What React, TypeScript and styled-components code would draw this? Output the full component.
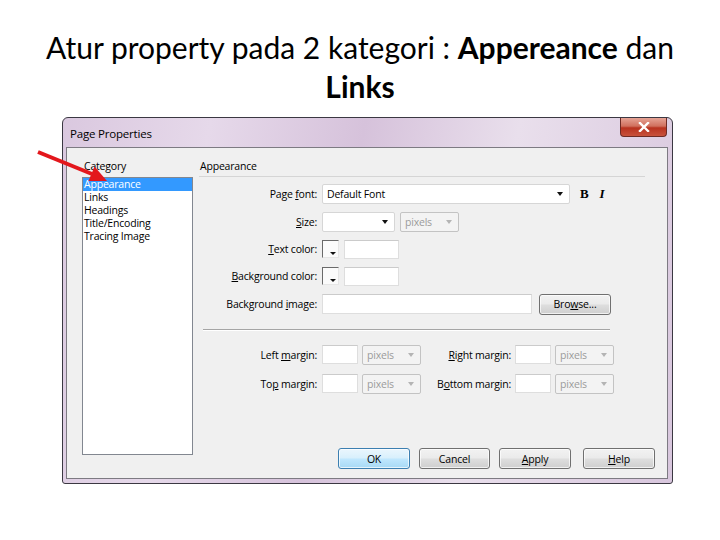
import React from "react";
import styled, { createGlobalStyle, css } from "styled-components";

const GlobalStyle = createGlobalStyle`
  html, body {
    margin: 0;
    padding: 0;
    background: #ffffff;
  }
`;

const Slide = styled.div`
  position: relative;
  width: 720px;
  height: 540px;
  padding-top: 28px;
  box-sizing: border-box;
  overflow: hidden;
`;

const Heading = styled.h1`
  margin: 0;
  font-family: Lato, "Liberation Sans", sans-serif;
  font-weight: 400;
  font-size: 30px;
  line-height: 39px;
  text-align: center;
  color: #000;

  b {
    font-weight: 700;
  }
`;

const Pointer = styled.svg`
  position: absolute;
  left: 30px;
  top: 140px;
  width: 85px;
  height: 50px;
  z-index: 2;
`;

const Window = styled.div`
  margin: 11px 0 0 62px;
  width: 611px;
  height: 367px;
  box-sizing: border-box;
  border: 1px solid #3b3842;
  border-radius: 6px 6px 3px 3px;
  padding: 0 4px 4px 3px;
  display: flex;
  flex-direction: column;
  background: linear-gradient(
    100deg,
    #dac8df 0%,
    #e6d9ea 22%,
    #d6c2db 45%,
    #e9dfec 68%,
    #d8c6dd 100%
  );
  font-family: "Open Sans", "Noto Sans", sans-serif;
  font-size: 10.5px;
  letter-spacing: -0.2px;
  color: #000;
`;

const TitleBar = styled.div`
  height: 29px;
  display: flex;
  align-items: center;
  padding-left: 4px;
  font-size: 11.5px;
  padding-top: 2px;
  box-sizing: border-box;
`;

const CloseButton = styled.div`
  align-self: flex-start;
  margin-top: -2px;
  margin-left: auto;
  margin-right: 1px;
  width: 47px;
  height: 19px;
  box-sizing: border-box;
  border: 1px solid #6e2b24;
  border-top: none;
  border-radius: 0 0 4px 4px;
  background: linear-gradient(#e6a395 0%, #d0705e 45%, #b8321f 55%, #c8523c 100%);
  display: flex;
  align-items: center;
  justify-content: center;
`;

const Panel = styled.div`
  flex: 1;
  display: flex;
  border: 1px solid #7d7a82;
  background: #f0f0f0;
  padding: 11px 12px 9px 15px;
`;

const CategoryColumn = styled.div`
  width: 111px;
  display: flex;
  flex-direction: column;
`;

const Caption = styled.div`
  line-height: 14px;
  height: 14px;
  padding-left: 2px;
  margin-bottom: 4px;
`;

const ListBox = styled.div`
  flex: 1;
  margin-bottom: 14px;
  border: 1px solid #828790;
  background: #fff;
`;

const ListItem = styled.div<{ selected?: boolean }>`
  height: 13px;
  line-height: 13px;
  padding-left: 1px;
  ${(p) =>
    p.selected &&
    css`
      background: #3399ff;
      color: #fff;
    `}
`;

const FormColumn = styled.div`
  flex: 1;
  margin-left: 6px;
  display: flex;
  flex-direction: column;
`;

const SectionTitle = styled.div`
  margin-right: 10px;
  padding: 0 0 3px 1px;
  line-height: 14px;
  border-bottom: 1px solid #d5d5d5;
`;

const Row = styled.div<{ h: number; top?: number }>`
  height: ${(p) => p.h}px;
  margin-top: ${(p) => p.top ?? 0}px;
  display: flex;
  align-items: center;
`;

const Label = styled.label<{ w?: number }>`
  width: ${(p) => p.w ?? 118}px;
  flex: none;
  text-align: right;
  white-space: nowrap;
`;

const Field = styled.div<{ w: number; h?: number; gap?: number }>`
  width: ${(p) => p.w}px;
  height: ${(p) => p.h ?? 20}px;
  margin-left: ${(p) => p.gap ?? 5}px;
  flex: none;
  box-sizing: border-box;
  border: 1px solid #dedede;
  border-top-color: #cbcbcb;
  background: #fff;
`;

const Select = styled.div<{ w: number; gap?: number; disabled?: boolean }>`
  width: ${(p) => p.w}px;
  height: 20px;
  margin-left: ${(p) => p.gap ?? 5}px;
  flex: none;
  box-sizing: border-box;
  display: flex;
  align-items: center;
  justify-content: space-between;
  padding: 0 6px 0 4px;
  border: 1px solid ${(p) => (p.disabled ? "#c3c3c3" : "#d6d6d6")};
  border-radius: 2px;
  background: ${(p) => (p.disabled ? "#f3f3f3" : "#fff")};
  color: ${(p) => (p.disabled ? "#9b9b9b" : "#000")};
`;

const Caret = styled.span<{ disabled?: boolean }>`
  width: 0;
  height: 0;
  border-left: 3.5px solid transparent;
  border-right: 3.5px solid transparent;
  border-top: 4px solid ${(p) => (p.disabled ? "#b4b4b4" : "#111")};
`;

const StyleToggle = styled.span<{ italic?: boolean }>`
  margin-left: ${(p) => (p.italic ? 11 : 10)}px;
  font-family: "Liberation Serif", serif;
  font-size: 13px;
  font-weight: 700;
  font-style: ${(p) => (p.italic ? "italic" : "normal")};
`;

const Swatch = styled.div`
  position: relative;
  width: 17px;
  height: 18px;
  margin-left: 5px;
  flex: none;
  box-sizing: border-box;
  border: 1px solid #e6e6e6;
  border-top-color: #6a6a6a;
  border-left-color: #6a6a6a;
  background: #fbfbfb;

  &::after {
    content: "";
    position: absolute;
    right: 2px;
    bottom: 2px;
    border-left: 3px solid transparent;
    border-right: 3px solid transparent;
    border-top: 3px solid #111;
  }
`;

const Separator = styled.div`
  margin: 11px 0 0 4px;
  width: 407px;
  border-top: 1px solid #a5a5a5;
  border-bottom: 1px solid #ffffff;
`;

const Button = styled.div<{ primary?: boolean; gap?: number; w?: number }>`
  width: ${(p) => p.w ?? 72}px;
  height: 21px;
  margin-left: ${(p) => p.gap ?? 9}px;
  box-sizing: border-box;
  display: flex;
  align-items: center;
  justify-content: center;
  border: 1px solid ${(p) => (p.primary ? "#3c7fb1" : "#707070")};
  border-radius: 3px;
  background: ${(p) =>
    p.primary
      ? "linear-gradient(#eaf6fd 0%, #d9f0fc 45%, #bee6fd 55%, #a7d9f5 100%)"
      : "linear-gradient(#f2f2f2 0%, #ebebeb 45%, #dddddd 55%, #cfcfcf 100%)"};
  box-shadow: inset 0 0 0 1px rgba(255, 255, 255, 0.7);
`;

const ButtonBar = styled.div`
  margin-top: auto;
  display: flex;
  justify-content: flex-end;
`;

const categories = ["Appearance", "Links", "Headings", "Title/Encoding", "Tracing Image"];

const PixelsSelect = ({ w = 59, gap = 4 }: { w?: number; gap?: number }) => (
  <Select w={w} gap={gap} disabled>
    <span>pixels</span>
    <Caret disabled />
  </Select>
);

const App = () => {
  return (
    <Slide>
      <GlobalStyle />
      <Heading>
        Atur property pada 2 kategori : <b>Appereance</b> dan
        <br />
        <b>Links</b>
      </Heading>

      <Pointer viewBox="0 0 85 50">
        <line x1="8" y1="12" x2="62" y2="34" stroke="#e3171c" strokeWidth="4" />
        <polygon points="77,41 58.5,41 64.5,26.5" fill="#e3171c" />
      </Pointer>

      <Window>
        <TitleBar>
          Page Properties
          <CloseButton>
            <svg width="12" height="10" viewBox="0 0 12 10">
              <path d="M2 1 L10 9 M10 1 L2 9" stroke="#fff" strokeWidth="2.4" strokeLinecap="square" />
            </svg>
          </CloseButton>
        </TitleBar>

        <Panel>
          <CategoryColumn>
            <Caption>Category</Caption>
            <ListBox>
              {categories.map((c, i) => (
                <ListItem key={c} selected={i === 0}>
                  {c}
                </ListItem>
              ))}
            </ListBox>
          </CategoryColumn>

          <FormColumn>
            <SectionTitle>Appearance</SectionTitle>

            <Row h={28} top={3}>
              <Label>
                Page <u>f</u>ont:
              </Label>
              <Select w={248}>
                <span>Default Font</span>
                <Caret />
              </Select>
              <StyleToggle>B</StyleToggle>
              <StyleToggle italic>I</StyleToggle>
            </Row>

            <Row h={28}>
              <Label>
                <u>S</u>ize:
              </Label>
              <Select w={73}>
                <span />
                <Caret />
              </Select>
              <PixelsSelect gap={5} />
            </Row>

            <Row h={26}>
              <Label>
                <u>T</u>ext color:
              </Label>
              <Swatch />
              <Field w={55} h={19} />
            </Row>

            <Row h={28}>
              <Label>
                <u>B</u>ackground color:
              </Label>
              <Swatch />
              <Field w={55} h={19} />
            </Row>

            <Row h={28}>
              <Label>
                Background <u>i</u>mage:
              </Label>
              <Field w={210} />
              <Button gap={7}>
                Bro<u>w</u>se...
              </Button>
            </Row>

            <Separator />

            <Row h={29} top={9}>
              <Label>
                Left <u>m</u>argin:
              </Label>
              <Field w={36} h={19} />
              <PixelsSelect />
              <Label w={90}>
                <u>R</u>ight margin:
              </Label>
              <Field w={36} h={19} gap={4} />
              <PixelsSelect />
            </Row>

            <Row h={29}>
              <Label>
                To<u>p</u> margin:
              </Label>
              <Field w={36} h={19} />
              <PixelsSelect />
              <Label w={90}>
                B<u>o</u>ttom margin:
              </Label>
              <Field w={36} h={19} gap={4} />
              <PixelsSelect />
            </Row>

            <ButtonBar>
              <Button primary gap={0}>
                OK
              </Button>
              <Button w={71}>Cancel</Button>
              <Button>
                <u>A</u>pply
              </Button>
              <Button gap={12}>
                <u>H</u>elp
              </Button>
            </ButtonBar>
          </FormColumn>
        </Panel>
      </Window>
    </Slide>
  );
};

export default App;
